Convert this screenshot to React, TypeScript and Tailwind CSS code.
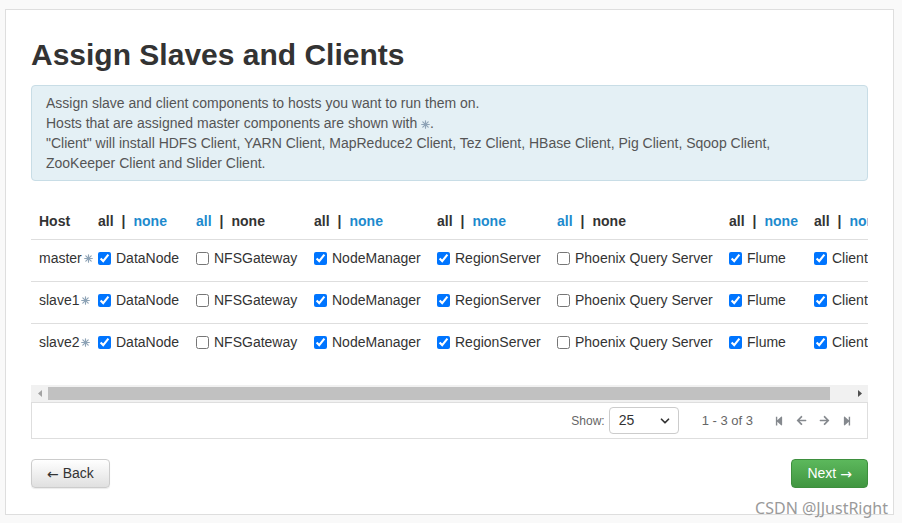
import { ChevronDown } from "lucide-react";
import { FaArrowLeft, FaArrowRight, FaStepBackward, FaStepForward } from "react-icons/fa";

const columns = [
  { name: "DataNode", on: true, width: "w-[98px] min-w-[98px]" },
  { name: "NFSGateway", on: false, width: "w-[118px] min-w-[118px]" },
  { name: "NodeManager", on: true, width: "w-[123px] min-w-[123px]" },
  { name: "RegionServer", on: true, width: "w-[120px] min-w-[120px]" },
  { name: "Phoenix Query Server", on: false, width: "w-[172px] min-w-[172px]" },
  { name: "Flume", on: true, width: "w-[85px] min-w-[85px]" },
  { name: "Client", on: true, width: "w-[120px] min-w-[120px]" },
];

const hosts = ["master", "slave1", "slave2"];

function MasterMark() {
  return (
    <svg width="9" height="9" viewBox="0 0 10 10" className="inline-block" aria-hidden>
      <g stroke="#8ea3b6" strokeWidth="1.3" strokeLinecap="round">
        <line x1="5" y1="0.8" x2="5" y2="9.2" />
        <line x1="0.8" y1="5" x2="9.2" y2="5" />
        <line x1="2" y1="2" x2="8" y2="8" />
        <line x1="8" y1="2" x2="2" y2="8" />
      </g>
      <circle cx="5" cy="5" r="1.3" fill="#8ea3b6" />
    </svg>
  );
}

function HeaderToggle({ on }: { on: boolean }) {
  return (
    <span className="whitespace-nowrap font-bold">
      <span className={on ? "text-[#333]" : "text-[#1d8acd]"}>all</span>
      <span className="mx-[8px] text-[#333]">|</span>
      <span className={on ? "text-[#1d8acd]" : "text-[#333]"}>none</span>
    </span>
  );
}

export default function App() {
  return (
    <div className="relative min-h-[523px] bg-[#f9f9f9] pt-[9px] pb-[7px] font-['Liberation_Sans',Arial,sans-serif] text-[14px] text-[#333]">
      <div className="ml-[5px] w-[889px] border border-[#dedede] bg-white px-[25px] pt-[28px] pb-[26px]">
        <h1 className="text-[30px] font-bold leading-[33px] text-[#333]">Assign Slaves and Clients</h1>

        <div className="mt-[14px] rounded-[4px] border border-[#c8dde6] bg-[#e4f0f5] px-[14px] py-[7px] leading-5 text-[#555]">
          <p>Assign slave and client components to hosts you want to run them on.</p>
          <p>
            Hosts that are assigned master components are shown with <MasterMark />.
          </p>
          <p>
            "Client" will install HDFS Client, YARN Client, MapReduce2 Client, Tez Client, HBase Client, Pig Client, Sqoop Client,
            <br />
            ZooKeeper Client and Slider Client.
          </p>
        </div>

        <div className="mt-[22px] overflow-hidden pb-[20px]">
          <table className="border-collapse whitespace-nowrap text-left">
            <thead>
              <tr className="border-b border-[#dedede]">
                <th className="w-[67px] min-w-[67px] py-2 pl-2 font-bold leading-5">Host</th>
                {columns.map((c) => (
                  <th key={c.name} className={`${c.width} py-2 leading-5`}>
                    <HeaderToggle on={c.on} />
                  </th>
                ))}
              </tr>
            </thead>
            <tbody>
              {hosts.map((h, i) => (
                <tr key={h} className={i < hosts.length - 1 ? "border-b border-[#dedede]" : ""}>
                  <td className="pt-2 pb-[13px] pl-2 leading-5">
                    <span className="flex items-center gap-[2px]">
                      {h}
                      <MasterMark />
                    </span>
                  </td>
                  {columns.map((c) => (
                    <td key={c.name} className="pt-2 pb-[13px] leading-5">
                      <label className="flex items-center gap-[5px]">
                        <input type="checkbox" defaultChecked={c.on} className="h-[13px] w-[13px]" />
                        <span>{c.name}</span>
                      </label>
                    </td>
                  ))}
                </tr>
              ))}
            </tbody>
          </table>
        </div>

        <div className="flex h-[17px] items-stretch bg-[#f1f1f1]">
          <div className="flex w-[17px] items-center justify-center">
            <svg width="4" height="7" viewBox="0 0 4 7">
              <path d="M4 0 L0 3.5 L4 7 Z" fill="#a3a3a3" />
            </svg>
          </div>
          <div className="my-[2px] w-[782px] bg-[#c1c1c1]" />
          <div className="flex-1" />
          <div className="flex w-[17px] items-center justify-center">
            <svg width="4" height="7" viewBox="0 0 4 7">
              <path d="M0 0 L4 3.5 L0 7 Z" fill="#505050" />
            </svg>
          </div>
        </div>

        <div className="flex h-[37px] items-center justify-end border border-[#dedede] pr-[15px]">
          <span className="text-[12px] text-[#666]">Show:</span>
          <div className="ml-[4px] flex h-[27px] w-[70px] items-center justify-between rounded-[4px] border border-[#ccc] pr-[6px] pl-[9px]">
            <span className="text-[14px] text-[#333]">25</span>
            <ChevronDown size={14} strokeWidth={3} className="text-[#333]" />
          </div>
          <span className="ml-[23px] text-[13px] text-[#666]">1 - 3 of 3</span>
          <div className="ml-[21px] flex items-center gap-[12px] text-[#85898e]">
            <FaStepBackward size={10} />
            <FaArrowLeft size={11} />
            <FaArrowRight size={11} />
            <FaStepForward size={10} />
          </div>
        </div>

        <div className="mt-[20px] flex items-center justify-between">
          <button className="flex h-[29px] items-center rounded-[4px] border border-[#ccc] bg-gradient-to-b from-white to-[#e0e0e0] px-[15px] text-[14px] text-[#333] shadow-[0_1px_1px_rgba(0,0,0,0.08)]">
            <span className="mr-[4px] font-['DejaVu_Sans',sans-serif] text-[14px] leading-none">←</span>
            Back
          </button>
          <button className="flex h-[29px] items-center rounded-[4px] border border-[#3e8f3e] bg-gradient-to-b from-[#5cb85c] to-[#419641] px-[15px] text-[14px] text-white">
            Next
            <span className="ml-[4px] font-['DejaVu_Sans',sans-serif] text-[14px] leading-none">→</span>
          </button>
        </div>
      </div>

      <span className="absolute right-[14px] bottom-[5px] font-['Noto_Sans',sans-serif] text-[16px] leading-5 text-[#9a9a9a]">
        CSDN @JJustRight
      </span>
    </div>
  );
}
